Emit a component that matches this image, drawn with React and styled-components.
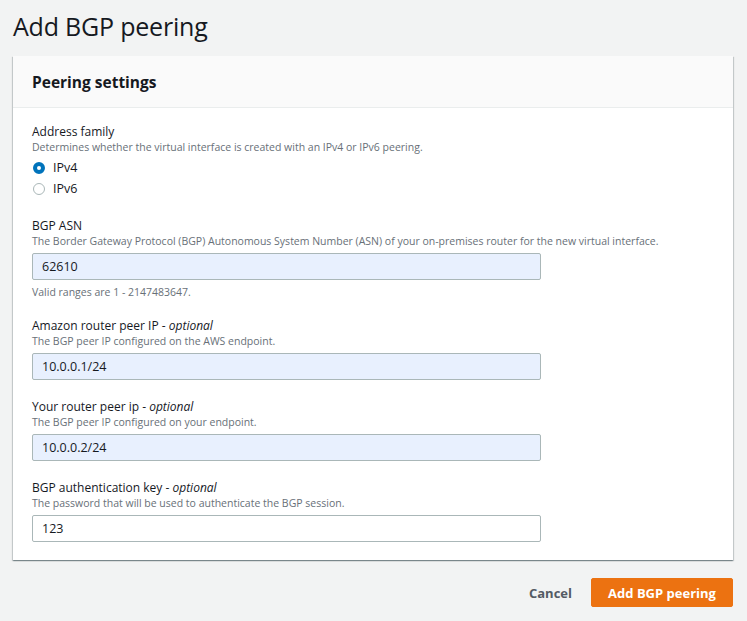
import styled, { createGlobalStyle } from 'styled-components';

const GlobalStyle = createGlobalStyle`
  body {
    margin: 0;
    background: #f2f3f3;
    font-family: "Open Sans", "Noto Sans", Arial, sans-serif;
    color: #16191f;
  }
`;

const Page = styled.div`
  padding: 10px 14px 0 13px;
  width: 747px;
  box-sizing: border-box;
`;

const Title = styled.h1`
  margin: 0 0 14px;
  font-size: 25px;
  font-weight: 400;
  line-height: 32px;
  letter-spacing: -0.2px;
`;

const Card = styled.div`
  background: #fff;
  box-shadow: 0 1px 1px 0 rgba(0, 28, 36, 0.3), 1px 1px 1px 0 rgba(0, 28, 36, 0.15),
    -1px 1px 1px 0 rgba(0, 28, 36, 0.15);
`;

const CardHeader = styled.div`
  background: #fafafa;
  border-bottom: 1px solid #eaeded;
  height: 51px;
  padding: 0 19px;
  display: flex;
  align-items: center;
  font-size: 15.5px;
  font-weight: 700;
`;

const CardBody = styled.div`
  padding: 15px 19px 18px;
  display: flex;
  flex-direction: column;
  gap: 18px;
`;

const Field = styled.div`
  display: flex;
  flex-direction: column;
`;

const Label = styled.div`
  font-size: 12px;
  line-height: 17px;
  em {
    font-style: italic;
  }
`;

const Desc = styled.div`
  font-size: 10.5px;
  line-height: 14px;
  color: #687078;
  margin-bottom: ${(p) => p.$mb || 5}px;
`;

const Hint = styled.div`
  font-size: 10.5px;
  line-height: 14px;
  color: #687078;
  margin-top: 5px;
`;

const Input = styled.input`
  width: 509px;
  height: 27px;
  box-sizing: border-box;
  border: 1px solid #aab7b8;
  border-radius: 2px;
  background: ${(p) => (p.$filled ? '#e8f0fe' : '#fff')};
  padding: 0 9px;
  font-family: inherit;
  font-size: 12.5px;
  color: #16191f;
  outline: none;
`;

const RadioRow = styled.label`
  display: flex;
  align-items: center;
  gap: 8px;
  height: 21px;
  font-size: 12.5px;
`;

const RadioDot = styled.span`
  width: 12px;
  height: 12px;
  border-radius: 50%;
  box-sizing: border-box;
  border: ${(p) => (p.$checked ? '4px solid #0073bb' : '1px solid #aab7b8')};
  background: #fff;
  margin-left: 1px;
`;

const Footer = styled.div`
  display: flex;
  justify-content: flex-end;
  align-items: center;
  gap: 19px;
  padding-top: 18px;
`;

const LinkButton = styled.button`
  background: none;
  border: none;
  font-family: inherit;
  font-weight: 700;
  font-size: 13px;
  color: #545b64;
  padding: 0;
`;

const PrimaryButton = styled.button`
  background: #ec7211;
  border: 1px solid #ec7211;
  border-radius: 2px;
  color: #fff;
  font-family: inherit;
  font-weight: 700;
  font-size: 13px;
  height: 29px;
  width: 142px;
`;

const fields = [
  {
    label: 'Amazon router peer IP',
    desc: 'The BGP peer IP configured on the AWS endpoint.',
    value: '10.0.0.1/24',
    filled: true,
  },
  {
    label: 'Your router peer ip',
    desc: 'The BGP peer IP configured on your endpoint.',
    value: '10.0.0.2/24',
    filled: true,
  },
  {
    label: 'BGP authentication key',
    desc: 'The password that will be used to authenticate the BGP session.',
    value: '123',
    filled: false,
  },
];

export default function App() {
  return (
    <Page>
      <GlobalStyle />
      <Title>Add BGP peering</Title>
      <Card>
        <CardHeader>Peering settings</CardHeader>
        <CardBody>
          <Field>
            <Label>Address family</Label>
            <Desc $mb={3}>Determines whether the virtual interface is created with an IPv4 or IPv6 peering.</Desc>
            <RadioRow>
              <RadioDot $checked />
              IPv4
            </RadioRow>
            <RadioRow>
              <RadioDot />
              IPv6
            </RadioRow>
          </Field>
          <Field>
            <Label>BGP ASN</Label>
            <Desc>
              The Border Gateway Protocol (BGP) Autonomous System Number (ASN) of your on-premises router for the new virtual interface.
            </Desc>
            <Input $filled defaultValue="62610" />
            <Hint>Valid ranges are 1 - 2147483647.</Hint>
          </Field>
          {fields.map((f) => (
            <Field key={f.label}>
              <Label>
                {f.label} - <em>optional</em>
              </Label>
              <Desc>{f.desc}</Desc>
              <Input $filled={f.filled} defaultValue={f.value} />
            </Field>
          ))}
        </CardBody>
      </Card>
      <Footer>
        <LinkButton>Cancel</LinkButton>
        <PrimaryButton>Add BGP peering</PrimaryButton>
      </Footer>
    </Page>
  );
}
